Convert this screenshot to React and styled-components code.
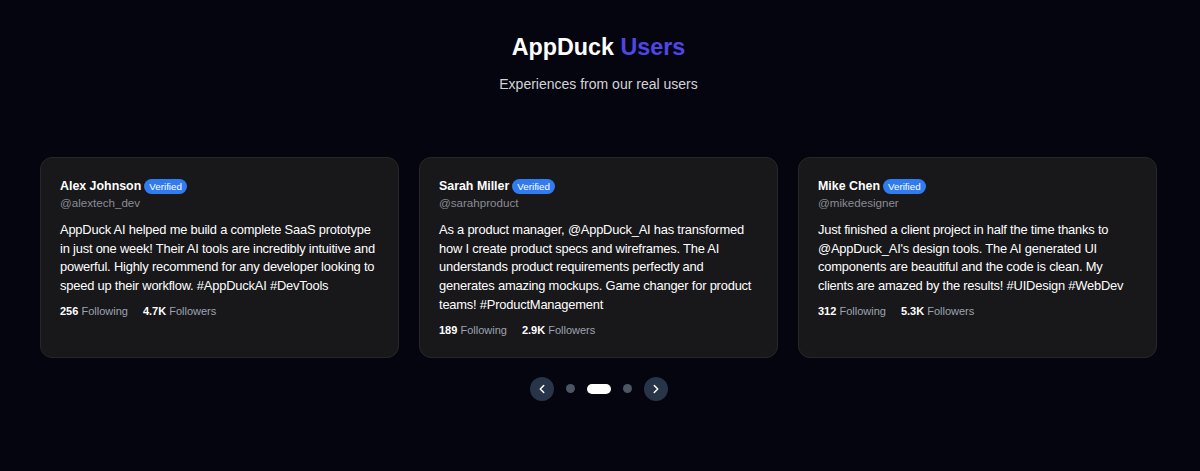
import React from 'react'
import styled, { createGlobalStyle } from 'styled-components'

const Global = createGlobalStyle`
  body {
    margin: 0;
    background: #05050f;
    font-family: "Liberation Sans", Arial, sans-serif;
  }
`

const Section = styled.section`
  min-height: 471px;
  box-sizing: border-box;
  padding: 33px 43px 0 40px;
  color: #fff;
`

const Title = styled.h2`
  margin: 0;
  text-align: center;
  font-size: 23.3px;
  line-height: 28px;
  font-weight: 700;
  span { color: #4f46e5; }
`

const Subtitle = styled.p`
  margin: 14px 0 0;
  text-align: center;
  font-size: 14px;
  line-height: 18px;
  color: #d4d4d8;
`

const Grid = styled.div`
  margin-top: 64px;
  display: grid;
  grid-template-columns: repeat(3, 1fr);
  gap: 20px;
`

const Card = styled.div`
  background: #18181b;
  border: 1px solid #27272a;
  border-radius: 12px;
  padding: 19px 18px 20px 19px;
`

const NameRow = styled.div`
  display: flex;
  align-items: center;
  gap: 3px;
`

const Name = styled.span`
  font-size: 12.4px;
  font-weight: 700;
  line-height: 18px;
`

const Badge = styled.span`
  background: #2f7bf0;
  color: #fff;
  font-size: 9.8px;
  line-height: 15px;
  padding: 0 5px;
  border-radius: 999px;
`

const Handle = styled.div`
  font-size: 11.6px;
  color: #8b8b94;
  line-height: 16px;
`

const Body = styled.p`
  margin: 10px 0 0;
  font-size: 12.9px;
  letter-spacing: -0.2px;
  line-height: 18.7px;
  color: #fff;
`

const Stats = styled.div`
  display: flex;
  gap: 15px;
  margin-top: 8px;
  font-size: 11px;
  line-height: 14px;
  color: #9ca3af;
  b { color: #fff; font-weight: 700; }
`

const Nav = styled.div`
  margin-top: 19px;
  display: flex;
  justify-content: center;
  align-items: center;
  gap: 12px;
`

const Arrow = styled.button`
  width: 24px;
  height: 24px;
  border-radius: 50%;
  border: none;
  padding: 0;
  background: #283447;
  color: #fff;
  display: flex;
  align-items: center;
  justify-content: center;
`

const Dot = styled.span`
  width: ${({ active }) => (active ? '24px' : '9px')};
  height: ${({ active }) => (active ? '10px' : '9px')};
  border-radius: 999px;
  background: ${({ active }) => (active ? '#fff' : '#4b5563')};
`

const users = [
  {
    name: 'Alex Johnson',
    handle: '@alextech_dev',
    text: 'AppDuck AI helped me build a complete SaaS prototype in just one week! Their AI tools are incredibly intuitive and powerful. Highly recommend for any developer looking to speed up their workflow. #AppDuckAI #DevTools',
    following: '256',
    followers: '4.7K',
  },
  {
    name: 'Sarah Miller',
    handle: '@sarahproduct',
    text: 'As a product manager, @AppDuck_AI has transformed how I create product specs and wireframes. The AI understands product requirements perfectly and generates amazing mockups. Game changer for product teams! #ProductManagement',
    following: '189',
    followers: '2.9K',
  },
  {
    name: 'Mike Chen',
    handle: '@mikedesigner',
    text: "Just finished a client project in half the time thanks to @AppDuck_AI's design tools. The AI generated UI components are beautiful and the code is clean. My clients are amazed by the results! #UIDesign #WebDev",
    following: '312',
    followers: '5.3K',
  },
]

const Chevron = ({ dir }) => (
  <svg width="14" height="14" viewBox="0 0 24 24" fill="none" stroke="currentColor" strokeWidth="2.5" strokeLinecap="round" strokeLinejoin="round">
    <path d={dir === 'left' ? 'M15 18l-6-6 6-6' : 'M9 18l6-6-6-6'} />
  </svg>
)

export default function App() {
  return (
    <>
      <Global />
      <Section>
        <Title>AppDuck <span>Users</span></Title>
        <Subtitle>Experiences from our real users</Subtitle>
        <Grid>
          {users.map(u => (
            <Card key={u.handle}>
              <NameRow>
                <Name>{u.name}</Name>
                <Badge>Verified</Badge>
              </NameRow>
              <Handle>{u.handle}</Handle>
              <Body>{u.text}</Body>
              <Stats>
                <span><b>{u.following}</b> Following</span>
                <span><b>{u.followers}</b> Followers</span>
              </Stats>
            </Card>
          ))}
        </Grid>
        <Nav>
          <Arrow><Chevron dir="left" /></Arrow>
          <Dot />
          <Dot active />
          <Dot />
          <Arrow><Chevron dir="right" /></Arrow>
        </Nav>
      </Section>
    </>
  )
}
